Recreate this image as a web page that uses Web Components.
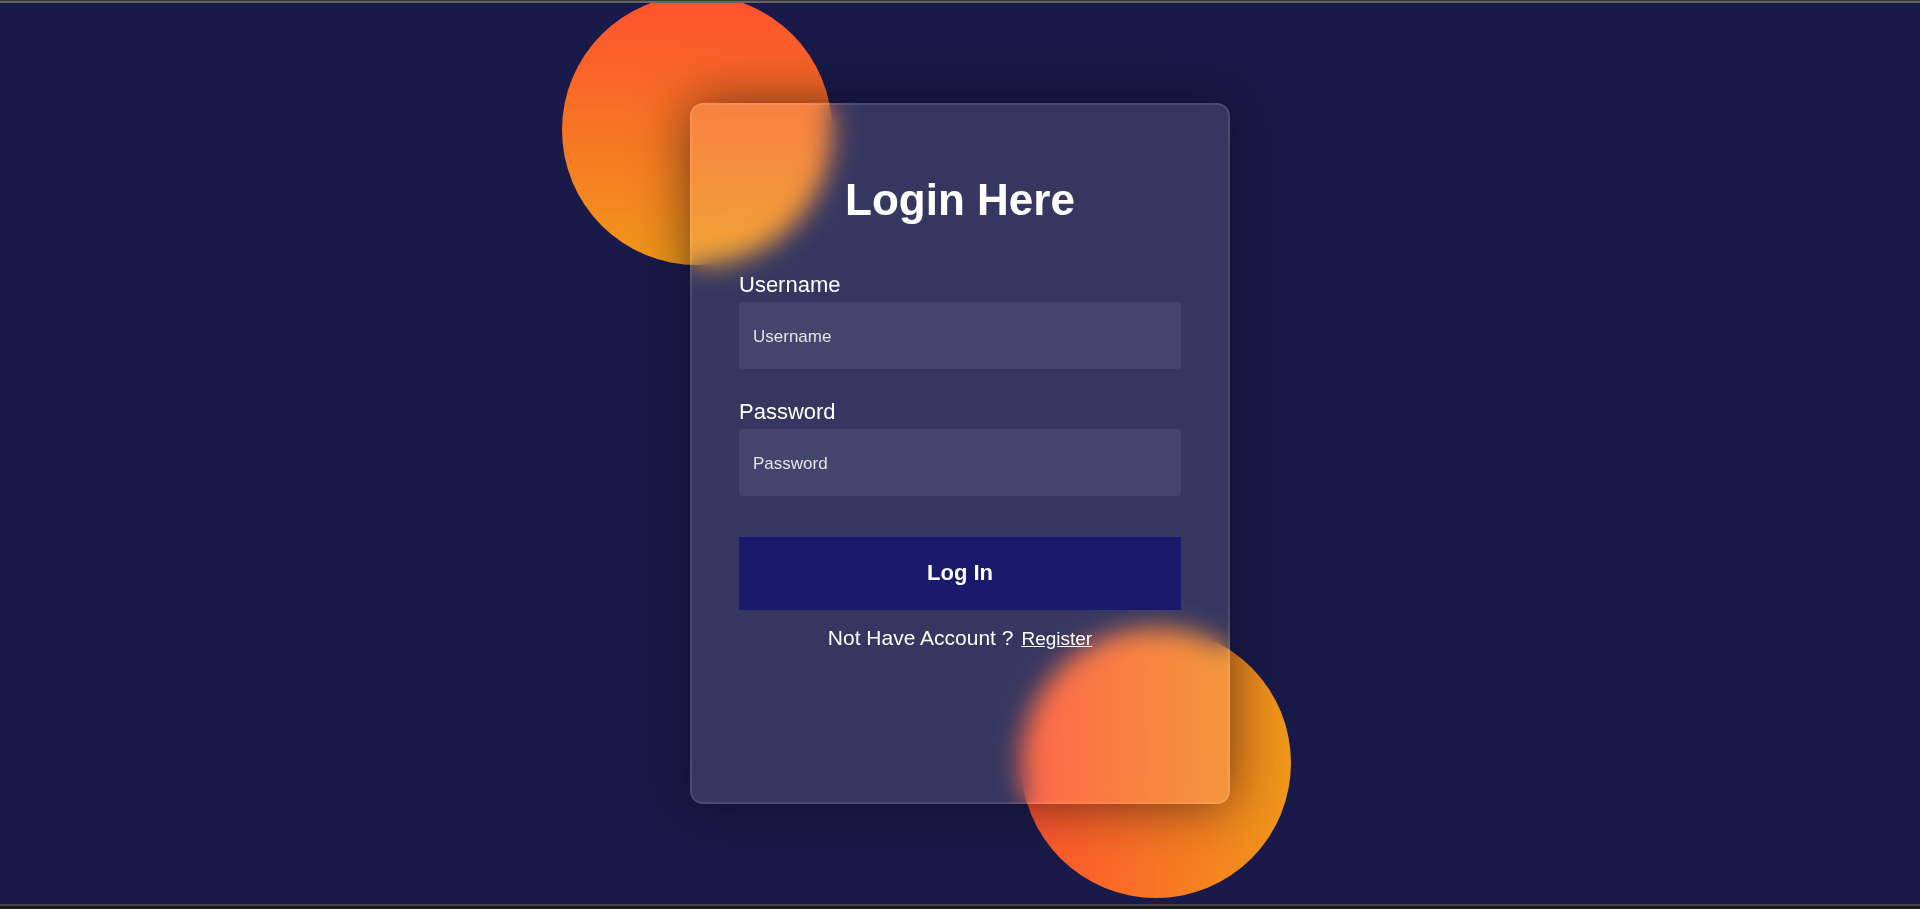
<!DOCTYPE html>
<html lang="en">
<head>
    <meta charset="UTF-8">
    <meta name="viewport" content="width=device-width, initial-scale=1.0">
    <title>Login</title>
    <style>
        body{
            margin: 0;
            background-color: #1a1a4a;
            font-family: Arial, "Liberation Sans", sans-serif;
            color: #fff;
        }
    </style>
</head>
<body>
    <login-page>
        <login-card heading="Login Here">
            <form-field label="Username" type="text"></form-field>
            <form-field label="Password" type="password"></form-field>
            <submit-button>Log In</submit-button>
            <register-hint href="#register" link="Register">Not Have Account ?</register-hint>
        </login-card>
    </login-page>

    <script>
        class loginPage extends HTMLElement{
            constructor(){
                super();
                this.attachShadow({mode: "open"});
            }

            getTemplate(){
                const template = document.createElement('template');
                template.innerHTML = `
                    <main>
                        <div class="stage">
                            <span class="circle first"></span>
                            <span class="circle second"></span>
                            <slot></slot>
                        </div>
                    </main>
                    ${this.getStyle()}
                `;
                return template;
            }

            getStyle(){
                return `
                    <style>
                        :host{
                            display: flex;
                            flex-direction: column;
                            box-sizing: border-box;
                            min-height: 100vh;
                        }

                        /* window edges */
                        :host::before{
                            content: "";
                            height: 2px;
                            border-top: 1px solid #38383a;
                            background-color: #666;
                        }

                        :host::after{
                            content: "";
                            height: 3px;
                            border-top: 2px solid #444;
                            background-color: #1c1c1c;
                        }

                        main{
                            flex: 1;
                            display: flex;
                            justify-content: center;
                            align-items: center;
                            overflow: hidden;
                        }

                        .stage{
                            position: relative;
                            display: flex;
                            justify-content: center;
                            width: 100%;
                            max-width: 580px;
                        }

                        .circle{
                            position: absolute;
                            width: 270px;
                            height: 270px;
                            border-radius: 50%;
                        }

                        .first{
                            left: -108px;
                            top: -108px;
                            background: linear-gradient(#ff512f, #f09819);
                        }

                        .second{
                            right: -41px;
                            bottom: -94px;
                            background: linear-gradient(to right, #ff512f, #f09819);
                        }
                    </style>
                `;
            }

            connectedCallback(){
                this.shadowRoot.appendChild(this.getTemplate().content.cloneNode(true));
            }
        }

        class loginCard extends HTMLElement{
            constructor(){
                super();
                this.attachShadow({mode: "open"});
            }

            getTemplate(){
                const template = document.createElement('template');
                template.innerHTML = `
                    <form>
                        <h1>${this.getAttribute('heading')}</h1>
                        <slot></slot>
                    </form>
                    ${this.getStyle()}
                `;
                return template;
            }

            getStyle(){
                return `
                    <style>
                        :host{
                            display: block;
                            position: relative;
                            box-sizing: border-box;
                            width: 100%;
                            max-width: 540px;
                            min-height: 701px;
                            padding: 66px 47px;
                            border: 2px solid rgba(255,255,255,0.1);
                            border-radius: 13px;
                            background-color: rgba(245,255,255,0.13);
                            backdrop-filter: blur(13px);
                            box-shadow: 0 0 54px rgba(8,7,16,0.6);
                        }

                        form{
                            display: flex;
                            flex-direction: column;
                        }

                        h1{
                            margin: 0 0 14px;
                            font-size: 44px;
                            line-height: 57px;
                            text-align: center;
                        }
                    </style>
                `;
            }

            connectedCallback(){
                this.shadowRoot.appendChild(this.getTemplate().content.cloneNode(true));
            }
        }

        class formField extends HTMLElement{
            constructor(){
                super();
                this.attachShadow({mode: "open"});
            }

            getTemplate(){
                const label = this.getAttribute('label');
                const template = document.createElement('template');
                template.innerHTML = `
                    <label for="field">${label}</label>
                    <input id="field" type="${this.getAttribute('type')}" placeholder="${label}">
                    ${this.getStyle()}
                `;
                return template;
            }

            getStyle(){
                return `
                    <style>
                        :host{
                            display: flex;
                            flex-direction: column;
                            gap: 5px;
                            margin-top: 30px;
                        }

                        label{
                            font-size: 22px;
                            line-height: 25px;
                        }

                        input{
                            box-sizing: border-box;
                            width: 100%;
                            height: 67px;
                            padding: 2px 14px 0;
                            border: none;
                            border-radius: 4px;
                            background-color: rgba(255,255,255,0.07);
                            color: inherit;
                            font-family: inherit;
                            font-size: 17px;
                        }

                        input::placeholder{
                            color: #e5e5e5;
                        }
                    </style>
                `;
            }

            connectedCallback(){
                this.shadowRoot.appendChild(this.getTemplate().content.cloneNode(true));
            }
        }

        class submitButton extends HTMLElement{
            constructor(){
                super();
                this.attachShadow({mode: "open"});
            }

            getTemplate(){
                const template = document.createElement('template');
                template.innerHTML = `
                    <button type="button"><slot></slot></button>
                    ${this.getStyle()}
                `;
                return template;
            }

            getStyle(){
                return `
                    <style>
                        :host{
                            display: block;
                            margin-top: 41px;
                        }

                        button{
                            width: 100%;
                            padding: 23px 0 25px;
                            border: none;
                            background-color: #1a1a6c;
                            color: #fff;
                            font-family: inherit;
                            font-size: 22px;
                            font-weight: bold;
                            line-height: 25px;
                            cursor: pointer;
                        }
                    </style>
                `;
            }

            connectedCallback(){
                this.shadowRoot.appendChild(this.getTemplate().content.cloneNode(true));
            }
        }

        class registerHint extends HTMLElement{
            constructor(){
                super();
                this.attachShadow({mode: "open"});
            }

            getTemplate(){
                const template = document.createElement('template');
                template.innerHTML = `
                    <p><slot></slot></p>
                    <a href="${this.getAttribute('href')}">${this.getAttribute('link')}</a>
                    ${this.getStyle()}
                `;
                return template;
            }

            getStyle(){
                return `
                    <style>
                        :host{
                            display: flex;
                            justify-content: center;
                            align-items: baseline;
                            gap: 8px;
                            margin-top: 15px;
                            font-size: 21px;
                            line-height: 25px;
                        }

                        p{
                            margin: 0;
                        }

                        a{
                            color: #fff;
                            font-size: 19px;
                        }
                    </style>
                `;
            }

            connectedCallback(){
                this.shadowRoot.appendChild(this.getTemplate().content.cloneNode(true));
            }
        }

        customElements.define("login-page", loginPage);
        customElements.define("login-card", loginCard);
        customElements.define("form-field", formField);
        customElements.define("submit-button", submitButton);
        customElements.define("register-hint", registerHint);
    </script>
</body>
</html>
